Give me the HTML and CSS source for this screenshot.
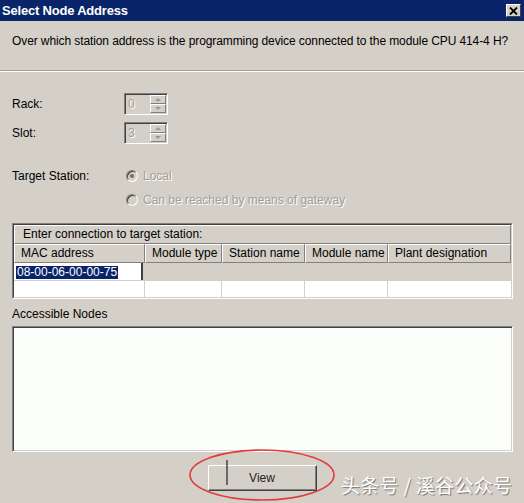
FILE: index.html
```html
<!DOCTYPE html>
<html>
<head>
<meta charset="utf-8">
<link rel="stylesheet" href="styles.css">
</head>
<body>
<div class="window">
  <div class="titlebar">
    <span class="title">Select Node Address</span>
    <span class="close"><svg width="9" height="8" viewBox="0 0 9 8"><path d="M1 0.5 L8 7.5 M8 0.5 L1 7.5" stroke="#000" stroke-width="1.8"/></svg></span>
  </div>
  <div class="question">Over which station address is the programming device connected to the module CPU 414-4 H?</div>
  <div class="content">
    <div class="field-row rack">
      <span class="label">Rack:</span>
      <div class="spin"><span class="spin-val">0</span><div class="spin-btns"><span class="spin-btn"><i class="up"></i></span><span class="spin-btn"><i class="down"></i></span></div></div>
    </div>
    <div class="field-row slot">
      <span class="label">Slot:</span>
      <div class="spin"><span class="spin-val">3</span><div class="spin-btns"><span class="spin-btn"><i class="up"></i></span><span class="spin-btn"><i class="down"></i></span></div></div>
    </div>
    <div class="target">
      <span class="label tlabel">Target Station:</span>
      <div class="radios">
        <div class="radio-row"><span class="radio checked"></span><span class="disabled">Local</span></div>
        <div class="radio-row"><span class="radio"></span><span class="disabled">Can be reached by means of gateway</span></div>
      </div>
    </div>
    <div class="grid">
      <div class="grid-inner">
        <div class="hcell span">Enter connection to target station:</div>
        <div class="hcell">MAC address</div>
        <div class="hcell">Module type</div>
        <div class="hcell">Station name</div>
        <div class="hcell">Module name</div>
        <div class="hcell">Plant designation</div>
        <div class="edit-cell"><span class="sel">08-00-06-00-00-75</span></div>
        <div class="gray-rest"></div>
        <div class="wcell"></div>
        <div class="wcell"></div>
        <div class="wcell"></div>
        <div class="wcell"></div>
        <div class="wcell last"></div>
      </div>
    </div>
    <div class="nodes-label">Accessible Nodes</div>
    <div class="listbox"></div>
  </div>
  <div class="footer">
    <button class="btn">View</button>
    <span class="cursor-line"></span>
    <svg class="ring" width="148" height="54" viewBox="0 0 148 54"><ellipse cx="74" cy="27" rx="72" ry="25" fill="none" stroke="#e23b3b" stroke-width="1.6"/></svg>
    <span class="watermark">头条号 / 溪谷公众号</span>
  </div>
</div>
</body>
</html>
```
FILE: styles.css
```css
* { box-sizing: border-box; margin: 0; padding: 0; }
html, body { width: 524px; height: 503px; overflow: hidden; }
body {
  background: #d4d0c8;
  font-family: "Liberation Sans", Arial, sans-serif;
  font-size: 12px;
  color: #000;
}
.window { width: 524px; height: 503px; display: flex; flex-direction: column; }
.titlebar {
  height: 21px;
  background: #0a246a;
  display: flex;
  align-items: center;
  justify-content: space-between;
  padding: 0 3px 0 2px;
}
.title { color: #fff; font-weight: bold; font-size: 13px; letter-spacing: -0.2px; }
.close {
  width: 15px; height: 13px;
  background: #d4d0c8;
  border: 1px solid;
  border-color: #fff #404040 #404040 #fff;
  display: flex; align-items: center; justify-content: center;
}
.question {
  height: 50px;
  padding: 13px 0 0 12px;
  line-height: 14px;
  letter-spacing: -0.1px;
  border-bottom: 1px solid #a09d96;
}
.content {
  border-top: 1px solid #fff;
  padding: 0 11px 0 12px;
  display: flex;
  flex-direction: column;
}
.field-row { display: flex; align-items: center; height: 22px; }
.rack { margin-top: 21px; }
.slot { margin-top: 7px; }
.label { width: 112px; line-height: 14px; }
.spin {
  width: 44px; height: 22px;
  border: 1px solid;
  border-color: #808080 #fff #fff #808080;
  display: flex;
  align-items: stretch;
}
.spin-val {
  flex: 1;
  border-top: 1px solid #404040;
  border-left: 1px solid #404040;
  padding: 2px 0 0 2px;
  color: #a19e98;
  text-shadow: 1px 1px 0 #fff;
  line-height: 15px;
}
.spin-btns {
  width: 17px;
  display: flex;
  flex-direction: column;
  border-top: 1px solid #404040;
  padding: 0 1px 1px 0;
}
.spin-btn {
  flex: 1;
  border: 1px solid;
  border-color: #fff #808080 #808080 #fff;
  display: flex; align-items: center; justify-content: center;
}
.spin-btn i { width: 0; height: 0; border-left: 3px solid transparent; border-right: 3px solid transparent; }
.spin-btn .up { border-bottom: 3px solid #9a9790; }
.spin-btn .down { border-top: 3px solid #9a9790; }
.target { display: flex; margin-top: 25px; }
.tlabel { width: 114px; }
.radios { display: flex; flex-direction: column; gap: 10px; }
.radio-row { display: flex; align-items: center; height: 14px; }
.radio {
  width: 12px; height: 12px;
  border-radius: 50%;
  border: 1px solid;
  border-color: #808080 #fff #fff #808080;
  box-shadow: inset 1px 1px 0 #404040, inset -1px -1px 0 #d4d0c8;
  background: #d4d0c8;
  margin-right: 5px;
  display: flex; align-items: center; justify-content: center;
}
.radio.checked::after {
  content: "";
  width: 4px; height: 4px;
  border-radius: 50%;
  background: #6e6c68;
}
.disabled { color: #a19e98; text-shadow: 1px 1px 0 #fff; line-height: 14px; }
.grid {
  margin-top: 16px;
  width: 501px;
  border: 1px solid;
  border-color: #808080 #fff #fff #808080;
}
.grid-inner {
  border: 1px solid;
  border-color: #404040 #d4d0c8 #d4d0c8 #404040;
  display: grid;
  grid-template-columns: 131px 77px 83px 83px 123px;
  grid-template-rows: 19px 19px 17px 17px;
}
.hcell {
  border: 1px solid;
  border-color: #fff #808080 #808080 #fff;
  padding-left: 6px;
  line-height: 17px;
  white-space: nowrap;
  overflow: hidden;
}
.hcell.span { grid-column: 1 / -1; padding-left: 8px; }
.edit-cell {
  background: #fff;
  border-right: 2px solid #404040;
  margin-right: 2px;
  padding: 2px 0 0 2px;
}
.sel {
  display: inline-block;
  background: #0a246a;
  color: #fff;
  line-height: 13px;
  padding: 0 1px;
}
.gray-rest { grid-column: 2 / -1; background: #d4d0c8; }
.wcell { background: #fff; border-right: 1px solid #d4d0c8; border-top: 1px solid #d4d0c8; }
.wcell.last { border-right: none; }
.nodes-label { margin-top: 8px; line-height: 14px; }
.listbox {
  margin-top: 5px;
  width: 501px;
  height: 126px;
  border: 1px solid;
  border-color: #808080 #fff #fff #808080;
  box-shadow: inset 1px 1px 0 #404040, inset -1px -1px 0 #d4d0c8;
  background: #fcfefc;
}
.footer {
  position: relative;
  flex: 1;
  display: flex;
  justify-content: center;
  align-items: flex-start;
}
.btn {
  margin-top: 13px;
  width: 109px; height: 26px;
  background: #d4d0c8;
  border: 1px solid;
  border-color: #fff #404040 #404040 #fff;
  box-shadow: inset -1px -1px 0 #808080;
  font-family: "Liberation Sans", Arial, sans-serif;
  font-size: 12px;
  color: #222;
}
.cursor-line {
  position: absolute;
  left: 226px; top: 8px;
  width: 2px; height: 25px;
  background: #6a6864;
}
.ring { position: absolute; left: 188px; top: -4px; }
.watermark {
  position: absolute;
  left: 341px; top: 22px;
  font-family: "Noto Sans CJK SC", sans-serif;
  font-size: 19px;
  line-height: 22px;
  letter-spacing: 0.3px;
  color: #fff;
  text-shadow: 1px 1px 1px rgba(0,0,0,0.45);
}
```
